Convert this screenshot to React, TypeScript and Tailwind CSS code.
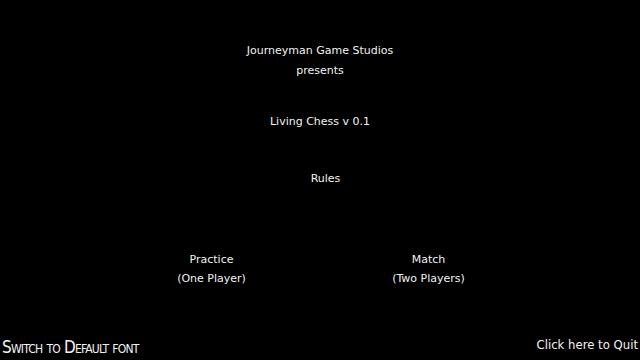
export default function App() {
  return (
    <div className="w-[640px] h-[360px] bg-black text-[#f2f2f2] flex flex-col font-['DejaVu_Sans',sans-serif] text-[11px] leading-[20px]">
      <div className="pt-[41px] text-center">
        <div>Journeyman Game Studios</div>
        <div>presents</div>
      </div>
      <div className="mt-[31px] text-center">Living Chess v 0.1</div>
      <div className="mt-[37px] text-center pl-[11px]">Rules</div>
      <div className="mt-[61px] flex justify-center leading-[19px]">
        <div className="w-[217px] text-center">
          <div>Practice</div>
          <div>(One Player)</div>
        </div>
        <div className="w-[217px] text-center">
          <div>Match</div>
          <div>(Two Players)</div>
        </div>
      </div>
      <div className="flex-1" />
      <div className="flex items-end justify-between pb-[2px]">
        <div className="pl-[2px] font-['DejaVu_Sans_Condensed',sans-serif] font-extralight [font-variant:small-caps] text-[17px] leading-[22px] tracking-[-0.8px]">
          Switch to Default font
        </div>
        <div className="pr-[2px] text-[11.7px] leading-[20px] pb-[3px]">Click here to Quit</div>
      </div>
    </div>
  );
}
